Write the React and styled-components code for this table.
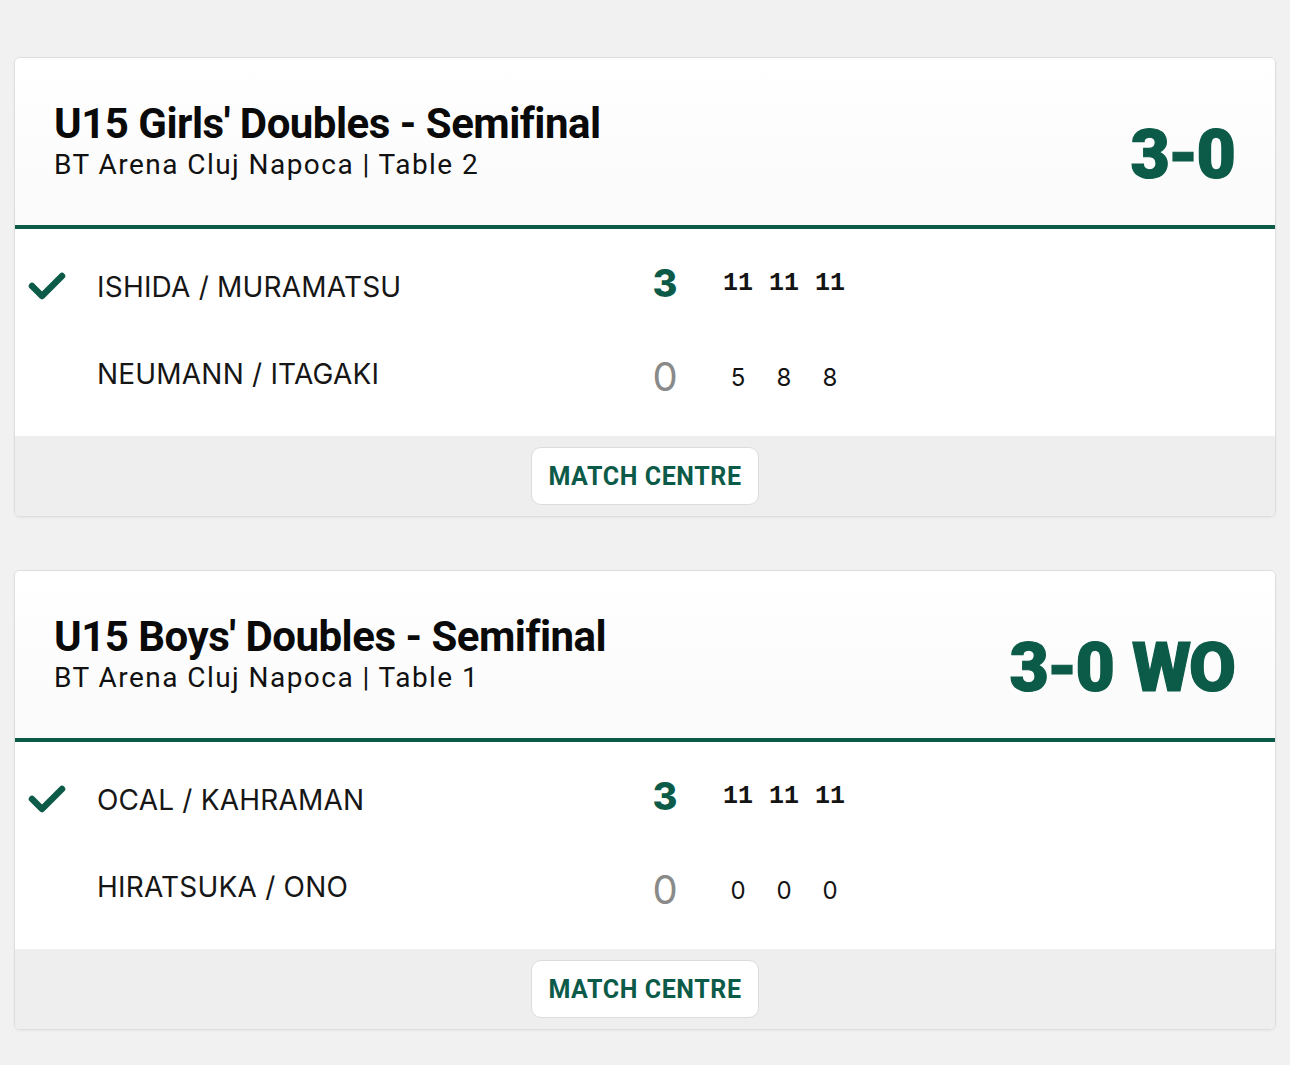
import React from 'react';
import styled, { createGlobalStyle } from 'styled-components';

const GREEN = '#0c5a48';

const GlobalStyle = createGlobalStyle`
  html, body {
    margin: 0;
    padding: 0;
    background: #f1f1f1;
  }
  body {
    font-family: Roboto, "Liberation Sans", sans-serif;
    color: #111;
  }
`;

const Page = styled.div`
  display: flex;
  flex-direction: column;
  gap: 53px;
  padding: 57px 14px 36px;
  min-height: 1065px;
  box-sizing: border-box;
`;

const Card = styled.section`
  background: #fff;
  border: 1px solid #dedede;
  border-radius: 6px;
  box-shadow: 0 1px 3px rgba(0, 0, 0, 0.05);
  overflow: hidden;
`;

const Header = styled.header`
  display: flex;
  align-items: center;
  justify-content: space-between;
  height: 167px;
  padding: 0 41px 0 39px;
  border-bottom: 4px solid ${GREEN};
  background: linear-gradient(180deg, #ffffff 0%, #fafafa 100%);
`;

const TitleBlock = styled.div`
  display: flex;
  flex-direction: column;
`;

const Title = styled.h2`
  margin: 0;
  font-family: Roboto, sans-serif;
  font-weight: 700;
  font-size: 42px;
  line-height: 46px;
  letter-spacing: -0.5px;
  color: #0a0a0a;
`;

const Venue = styled.div`
  font-family: Roboto, sans-serif;
  font-size: 28px;
  line-height: 36px;
  letter-spacing: 1.45px;
  color: #111;
`;

const Result = styled.div`
  margin-top: 26px;
  font-family: Roboto, sans-serif;
  font-weight: 900;
  font-size: 68px;
  line-height: 1;
  letter-spacing: -2px;
  word-spacing: 4px;
  -webkit-text-stroke: 1.2px ${GREEN};
  color: ${GREEN};
`;

const Body = styled.div`
  padding: 14px 0 19px;
`;

const Row = styled.div`
  display: flex;
  align-items: center;
  height: 87px;
`;

const CheckCell = styled.div`
  width: 82px;
  padding-left: 13px;
  box-sizing: border-box;
  display: flex;
  align-items: center;
`;

const Name = styled.div`
  width: 548px;
  font-family: Inter, "Liberation Sans", sans-serif;
  font-size: 28px;
  letter-spacing: 0.2px;
  color: #161616;
`;

const SetScore = styled.div`
  width: 40px;
  text-align: center;
  font-family: Inter, "Liberation Sans", sans-serif;
  font-size: ${(p) => (p.$won ? '38px' : '40px')};
  font-weight: ${(p) => (p.$won ? 800 : 400)};
  color: ${(p) => (p.$won ? GREEN : '#8a8a8a')};
  margin-top: ${(p) => (p.$won ? '-8px' : '6px')};
`;

const Games = styled.div`
  display: flex;
  margin-left: 30px;
  margin-top: ${(p) => (p.$won ? '-6px' : '8px')};
`;

const Game = styled.span`
  width: 46px;
  text-align: center;
  font-family: ${(p) =>
    p.$won
      ? '"Liberation Mono", "DejaVu Sans Mono", monospace'
      : 'Inter, "Liberation Sans", sans-serif'};
  font-size: ${(p) => (p.$won ? '25px' : '24px')};
  font-weight: ${(p) => (p.$won ? 700 : 400)};
  color: #141414;
`;

const Footer = styled.footer`
  display: flex;
  align-items: center;
  justify-content: center;
  height: 80px;
  background: #eeeeee;
`;

const CentreButton = styled.button`
  width: 228px;
  height: 58px;
  border: 1px solid #dcdcdc;
  border-radius: 10px;
  background: #fff;
  font-family: Roboto, sans-serif;
  font-weight: 700;
  font-size: 25px;
  letter-spacing: 0.6px;
  color: ${GREEN};
  cursor: pointer;
`;

const Check = () => (
  <svg width="38" height="30" viewBox="0 0 38 30">
    <polyline
      points="4,14 14,24 34,4"
      fill="none"
      stroke={GREEN}
      strokeWidth="6.5"
      strokeLinecap="round"
      strokeLinejoin="round"
    />
  </svg>
);

const PlayerRow = ({ team, won }) => (
  <Row>
    <CheckCell>{won && <Check />}</CheckCell>
    <Name>{team.name}</Name>
    <SetScore $won={won}>{team.sets}</SetScore>
    <Games $won={won}>
      {team.games.map((g, i) => (
        <Game key={i} $won={won}>
          {g}
        </Game>
      ))}
    </Games>
  </Row>
);

const matches = [
  {
    title: "U15 Girls' Doubles - Semifinal",
    venue: 'BT Arena Cluj Napoca | Table 2',
    result: '3-0',
    teams: [
      { name: 'ISHIDA / MURAMATSU', sets: 3, games: [11, 11, 11] },
      { name: 'NEUMANN / ITAGAKI', sets: 0, games: [5, 8, 8] },
    ],
  },
  {
    title: "U15 Boys' Doubles - Semifinal",
    venue: 'BT Arena Cluj Napoca | Table 1',
    result: '3-0 WO',
    teams: [
      { name: 'OCAL / KAHRAMAN', sets: 3, games: [11, 11, 11] },
      { name: 'HIRATSUKA / ONO', sets: 0, games: [0, 0, 0] },
    ],
  },
];

const App = () => (
  <>
    <GlobalStyle />
    <Page>
      {matches.map((m) => (
        <Card key={m.title}>
          <Header>
            <TitleBlock>
              <Title>{m.title}</Title>
              <Venue>{m.venue}</Venue>
            </TitleBlock>
            <Result>{m.result}</Result>
          </Header>
          <Body>
            <PlayerRow team={m.teams[0]} won />
            <PlayerRow team={m.teams[1]} />
          </Body>
          <Footer>
            <CentreButton>MATCH CENTRE</CentreButton>
          </Footer>
        </Card>
      ))}
    </Page>
  </>
);

export default App;
